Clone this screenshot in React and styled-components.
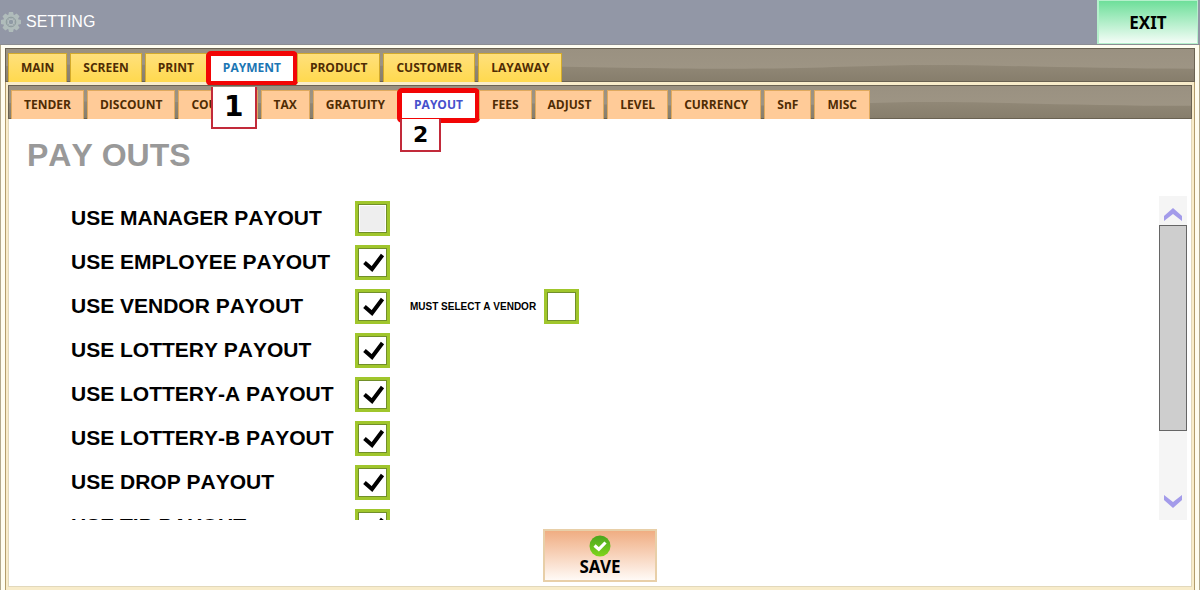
import { useState } from "react"
import styled, { createGlobalStyle } from "styled-components"

const mainTabs = ["MAIN", "SCREEN", "PRINT", "PAYMENT", "PRODUCT", "CUSTOMER", "LAYAWAY"]

const subTabs = [
    "TENDER", "DISCOUNT", "COUPON", "TAX", "GRATUITY", "PAYOUT",
    "FEES", "ADJUST", "LEVEL", "CURRENCY", "SnF", "MISC",
]

const payouts = [
    { id: "manager", label: "USE MANAGER PAYOUT", checked: false, muted: true },
    { id: "employee", label: "USE EMPLOYEE PAYOUT", checked: true },
    { id: "vendor", label: "USE VENDOR PAYOUT", checked: true },
    { id: "lottery", label: "USE LOTTERY PAYOUT", checked: true },
    { id: "lottery-a", label: "USE LOTTERY-A PAYOUT", checked: true },
    { id: "lottery-b", label: "USE LOTTERY-B PAYOUT", checked: true },
    { id: "drop", label: "USE DROP PAYOUT", checked: true },
    { id: "tip", label: "USE TIP PAYOUT", checked: true },
]

export default function App() {

    const [mainTab, setMainTab] = useState("PAYMENT");
    const [subTab, setSubTab] = useState("PAYOUT");

    return (
        <>
            <GlobalStyle />
            <SCPage>
                <SCHeader>
                    <GearIcon />
                    <h1>SETTING</h1>
                    <SCExit type="button">EXIT</SCExit>
                </SCHeader>
                <SCFrame>
                    <SCTabBar role="tablist" aria-label="Settings">
                        <Wave />
                        {mainTabs.map(name => (
                            <SCTab key={name} type="button" role="tab" aria-selected={mainTab === name}
                                $active={mainTab === name} $activeColor="#1b76b4" onClick={() => setMainTab(name)}>
                                {name}
                                {mainTab === name && <SCMarker $size="large">1</SCMarker>}
                            </SCTab>
                        ))}
                    </SCTabBar>
                    <SCInner>
                        <SCTabBar role="tablist" aria-label="Payment">
                            <Wave />
                            {subTabs.map(name => (
                                <SCTab key={name} type="button" role="tab" aria-selected={subTab === name} $sub
                                    $active={subTab === name} $activeColor="#4650cc" onClick={() => setSubTab(name)}>
                                    {name}
                                    {subTab === name && <SCMarker $size="small">2</SCMarker>}
                                </SCTab>
                            ))}
                        </SCTabBar>
                        <SCPanel>
                            <SCTitle>PAY OUTS</SCTitle>
                            <SCScrollArea>
                                <SCList>
                                    {payouts.map(item => <PayoutRow key={item.id} {...item} />)}
                                </SCList>
                                <SCScrollBar>
                                    <SCArrow type="button" aria-label="Scroll up">
                                        <svg width="18" height="13" viewBox="0 0 18 13">
                                            <path d="M0 8 L9 0 L18 8 V13 L9 6 L0 13 Z" />
                                        </svg>
                                    </SCArrow>
                                    <SCTrack><SCThumb /></SCTrack>
                                    <SCArrow type="button" aria-label="Scroll down">
                                        <svg width="18" height="13" viewBox="0 0 18 13">
                                            <path d="M0 5 L9 13 L18 5 V0 L9 7 L0 0 Z" />
                                        </svg>
                                    </SCArrow>
                                </SCScrollBar>
                            </SCScrollArea>
                            <SCFooter>
                                <SCSave type="button">
                                    <SaveIcon />
                                    SAVE
                                </SCSave>
                            </SCFooter>
                        </SCPanel>
                    </SCInner>
                </SCFrame>
            </SCPage>
        </>
    )
}

function PayoutRow({ id, label, checked, muted }) {
    return (
        <SCRow>
            <SCLabel htmlFor={id}>{label}</SCLabel>
            <Check id={id} checked={checked} muted={muted} />
            {id === "vendor" && (
                <>
                    <SCSmallLabel htmlFor="must-vendor">MUST SELECT A VENDOR</SCSmallLabel>
                    <Check id="must-vendor" checked={false} />
                </>
            )}
        </SCRow>
    )
}

function Check({ id, checked, muted }) {
    return (
        <SCCheck>
            <input id={id} type="checkbox" defaultChecked={checked} data-muted={muted} />
            <svg viewBox="0 0 35 35">
                <path d="M9.500 17.500 L17 24 L27.500 10" />
            </svg>
        </SCCheck>
    )
}

function GearIcon() {
    const teeth = [0, 45, 90, 135, 180, 225, 270, 315];
    return (
        <svg width="20" height="22" viewBox="0 0 20 22" aria-hidden="true">
            {teeth.map(angle => (
                <path key={angle} d="M7 5 L8 1 H12 L13 5 Z" fill="#b0bcbb" transform={`rotate(${angle} 10 11)`} />
            ))}
            <circle cx="10" cy="11" r="5.500" fill="none" stroke="#b0bcbb" strokeWidth="4" />
            <circle cx="10" cy="11" r="4.800" fill="none" stroke="#8b999b" strokeWidth="1" />
            <circle cx="10" cy="11" r="2.800" fill="#8f9aa5" stroke="#b9c4c2" strokeWidth="1" />
        </svg>
    )
}

function SaveIcon() {
    return (
        <svg width="22" height="22" viewBox="0 0 22 22" aria-hidden="true">
            <defs>
                <linearGradient id="saveFill" x1="0" y1="0" x2="0" y2="1">
                    <stop offset="0" stopColor="#4aa51e" />
                    <stop offset="1" stopColor="#7fd51c" />
                </linearGradient>
            </defs>
            <circle cx="11" cy="11" r="10.500" fill="url(#saveFill)" />
            <path d="M5.500 10.500 L9.800 14.300 L16.500 7.500" fill="none" stroke="#fff" strokeWidth="3.200" />
        </svg>
    )
}

function Wave() {
    return (
        <SCWave viewBox="0 0 1190 34" preserveAspectRatio="none" aria-hidden="true">
            <defs>
                <linearGradient id="waveFill" x1="0" y1="0" x2="0" y2="1">
                    <stop offset="0" stopColor="#918877" />
                    <stop offset="1" stopColor="#877e6c" />
                </linearGradient>
            </defs>
            <path d="M0 18 C120 14 240 20 360 18 S620 21 720 21 S860 17 930 17 S1090 21 1190 21 V34 H0 Z" fill="url(#waveFill)" />
        </SCWave>
    )
}

const GlobalStyle = createGlobalStyle`
    * {
        box-sizing: border-box;
    }
    body {
        margin: 0;
        font-family: 'Liberation Sans', Arial, sans-serif;
        font-kerning: none;
    }
    button {
        font-family: inherit;
        cursor: pointer;
    }
`

const SCPage = styled.div`
    height: 100vh;
    min-height: 400px;
    display: flex;
    flex-direction: column;
    background-color: #fffdf0;
`

const SCHeader = styled.header`
    height: 45px;
    display: flex;
    align-items: center;
    padding: 0 2px 0 1px;
    background-color: #9297a6;
    border-bottom: 1px solid #8b8d93;
    h1 {
        margin: 0 auto 0 5px;
        font-size: 16px;
        font-weight: 400;
        color: #ffffff;
    }
`

const SCExit = styled.button`
    width: 101px;
    height: 44px;
    border: 1px solid #b5f0cc;
    border-width: 1px 1px 1px 2px;
    background: linear-gradient(#6edf9a, #f4fdf7);
    font-family: 'Noto Sans', Tahoma, sans-serif;
    font-size: 17px;
    font-weight: 700;
    color: #000000;
`

const SCFrame = styled.div`
    flex: 1;
    min-height: 0;
    display: flex;
    flex-direction: column;
    padding: 3px 4px 0 4px;
    border: 1px solid #b3a98c;
    border-width: 0 1px;
    background-color: #fffdf0;
`

const SCTabBar = styled.div`
    position: relative;
    height: 34px;
    display: flex;
    align-items: flex-end;
    gap: 3px;
    padding: 0 2px;
    border: 1px solid #6a6252;
    border-bottom: none;
    background: linear-gradient(#9a9181, #a09786);
`

const SCWave = styled.svg`
    position: absolute;
    inset: 0;
    width: 100%;
    height: 100%;
    border-bottom: 1px solid #6a6252;
`

const SCTab = styled.button`
    position: relative;
    height: 29px;
    padding: 0 12px;
    border: 1px solid ${props => props.$sub ? "#dfa95e" : "#d3aa2c"};
    border-bottom: none;
    background: ${props => props.$active ? "#ffffff" : props.$sub ? "#ffcb98" : "linear-gradient(#ffe07c, #ffd94e)"};
    font-family: 'Open Sans', 'Segoe UI', sans-serif;
    font-size: 12px;
    line-height: 16px;
    font-weight: 700;
    color: ${props => props.$active ? props.$activeColor : "#4f2c04"};
    white-space: nowrap;
    &::after {
        content: ${props => props.$active ? "''" : "none"};
        position: absolute;
        inset: -3px -5px -4px -5px;
        border: 5px solid #f20505;
        border-radius: 5px;
    }
`

const SCMarker = styled.span`
    position: absolute;
    z-index: 2;
    top: ${props => props.$size === "large" ? "33px" : "28px"};
    left: ${props => props.$size === "large" ? "0" : "-2px"};
    width: ${props => props.$size === "large" ? "46px" : "41px"};
    height: ${props => props.$size === "large" ? "42px" : "33px"};
    display: flex;
    align-items: center;
    justify-content: center;
    border: 2px solid #c22a3a;
    border-top: none;
    background-color: #ffffff;
    font-family: 'DejaVu Sans', Verdana, sans-serif;
    font-size: ${props => props.$size === "large" ? "28px" : "22px"};
    font-weight: 700;
    color: #000000;
`

const SCInner = styled.div`
    flex: 1;
    min-height: 0;
    display: flex;
    flex-direction: column;
    padding: 3px 2px 3px 2px;
    border: 1px solid #b39c6c;
    border-width: 0 1px;
    background-color: #f8ecca;
`

const SCPanel = styled.main`
    flex: 1;
    min-height: 0;
    display: flex;
    flex-direction: column;
    border: 1px solid #e2d8bb;
    border-top: none;
    background-color: #ffffff;
`

const SCTitle = styled.h2`
    margin: 0;
    padding: 17px 18px 0;
    height: 77px;
    font-size: 32px;
    line-height: 38px;
    font-weight: 700;
    color: #999999;
`

const SCScrollArea = styled.div`
    flex: 1;
    min-height: 0;
    display: flex;
    justify-content: space-between;
    padding: 0 4px 0 62px;
`

const SCList = styled.div`
    flex: 1;
    overflow: hidden;
`

const SCRow = styled.div`
    height: 44px;
    display: flex;
    align-items: center;
`

const SCLabel = styled.label`
    width: 284px;
    font-size: 21px;
    font-weight: 700;
    color: #000000;
`

const SCSmallLabel = styled.label`
    margin: 0 8px 0 20px;
    font-size: 10px;
    font-weight: 700;
    color: #000000;
`

const SCCheck = styled.span`
    position: relative;
    width: 35px;
    height: 35px;
    input {
        appearance: none;
        display: block;
        width: 35px;
        height: 35px;
        margin: 0;
        border: 3px solid #a0c62c;
        outline: 1px solid #718f2a;
        outline-offset: -4px;
        box-shadow: inset 0 0 0 2px #ffffff;
        background-color: #ffffff;
    }
    input[data-muted="true"] {
        background-color: #eeeeee;
    }
    svg {
        position: absolute;
        inset: 0;
        pointer-events: none;
        visibility: hidden;
        fill: none;
        stroke: #000000;
        stroke-width: 4px;
    }
    input:checked + svg {
        visibility: visible;
    }
`

const SCScrollBar = styled.div`
    width: 28px;
    display: flex;
    flex-direction: column;
    background-color: #f5f5f5;
`

const SCArrow = styled.button`
    height: 29px;
    display: flex;
    align-items: center;
    justify-content: center;
    padding: 8px 0 0;
    border: none;
    background: none;
    fill: #a39bea;
    &:last-child {
        height: 37px;
        padding: 0;
    }
`

const SCTrack = styled.div`
    flex: 1;
`

const SCThumb = styled.div`
    height: 80%;
    border: 1px solid #666666;
    background-color: #cecece;
`

const SCFooter = styled.footer`
    display: flex;
    justify-content: center;
    padding: 9px 0 4px;
`

const SCSave = styled.button`
    width: 114px;
    height: 53px;
    display: flex;
    flex-direction: column;
    align-items: center;
    justify-content: center;
    padding: 0;
    border: 2px solid #e8cfa8;
    background: linear-gradient(#f0ad82, #fffaf6);
    font-family: 'Noto Sans', Tahoma, sans-serif;
    font-size: 17px;
    line-height: 20px;
    font-weight: 700;
    color: #000000;
`
